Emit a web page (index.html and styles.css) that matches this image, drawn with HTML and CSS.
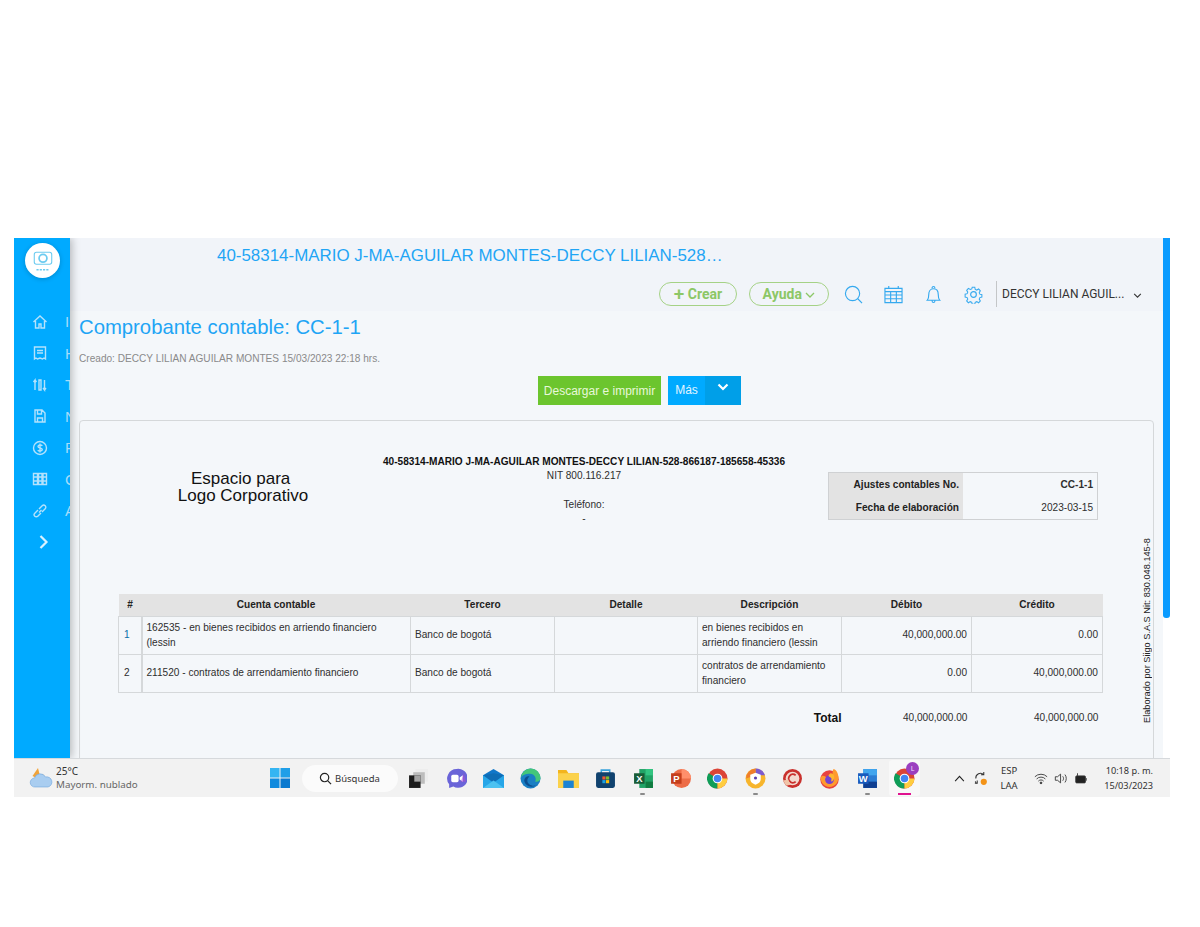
FILE: index.html
```html
<!DOCTYPE html>
<html lang="es">
<head>
    <meta charset="UTF-8">
    <title>Comprobante contable: CC-1-1</title>
    <link rel="stylesheet" href="styles.css">
</head>
<body>
    <div class="screen">
        <div class="app">
            <nav class="sidebar">
                <div class="brand">
                    <svg width="24" height="22" viewBox="0 0 22 20" fill="none" stroke="#6ccbf0" stroke-width="1"><rect x="3" y="2" width="16" height="11" rx="2"/><circle cx="11" cy="7.5" r="3.6" stroke-width="1.6"/><path d="M5 18h12" stroke-width="1.2" stroke-dasharray="2 1"/></svg>
                </div>
                <ul class="side-menu">
                    <li><svg viewBox="0 0 16 16"><path d="M1.5 8 8 2l6.500 6M3.500 7v7h3.500v-4h2v4h3.500V7"/></svg><span>Inicio</span></li>
                    <li><svg viewBox="0 0 16 16"><path d="M2.500 2h11v12l-1.500-1-1.500 1-2.500-1-2.500 1-1.500-1-1.500 1zM5 5.500h6M5 8h6"/></svg><span>Historial</span></li>
                    <li><svg viewBox="0 0 16 16"><path d="M3 13V3L1.500 5M3 3l1.500 2M7 3h2v10H7zM12.500 3v10l-1.500-2M12.500 13l1.500-2"/></svg><span>Terceros</span></li>
                    <li><svg viewBox="0 0 16 16"><path d="M3 2h7l3 3v9H3zM5.500 2v4h4V2M5.500 14v-4h5v4"/></svg><span>Nómina</span></li>
                    <li><svg viewBox="0 0 16 16"><circle cx="8" cy="8" r="6.500"/><path d="M10.300 5.800C9.500 4.600 6 4.700 6 6.500s4.300 1.200 4.300 3.100S6.700 11.500 5.800 10.200M8 3.500v9"/></svg><span>Reportes</span></li>
                    <li><svg viewBox="0 0 16 16"><path d="M1.500 2.500h4v11h-4zM6.500 2.500h3.500v11H6.500zM11 2.500h3.500v11H11zM1.500 6h13M1.500 10h13"/></svg><span>Contabilidad</span></li>
                    <li><svg viewBox="0 0 16 16"><path d="M7 9.500 9.500 7M6 7 2.800 10.200a2.100 2.100 0 0 0 3 3L9 10M7 6l3.200-3.200a2.100 2.100 0 0 1 3 3L10 9"/></svg><span>Accesos</span></li>
                </ul>
                <svg class="side-toggle" viewBox="0 0 10 16"><path d="M2 2l6 6-6 6"/></svg>
            </nav>

            <main class="main">
                <header class="topbar">
                    <div class="company-title">40-58314-MARIO J-MA-AGUILAR MONTES-DECCY LILIAN-528…</div>
                    <div class="top-actions">
                        <button class="pill"><span class="pill-plus">+</span> Crear</button>
                        <button class="pill">Ayuda <svg class="pill-caret" viewBox="0 0 10 6"><path d="M1 1l4 4 4-4"/></svg></button>
                        <svg class="top-icon" viewBox="0 0 20 20"><circle cx="9" cy="9" r="7.500"/><path d="M14.500 14.500 19 19"/></svg>
                        <svg class="top-icon" viewBox="0 0 20 20"><path d="M1 3.500h18v15H1zM1 7h18M1 10.500h18M1 14.500h18M7 7v11.500M13 7v11.500M5 1v3M15 1v3"/></svg>
                        <svg class="top-icon" viewBox="0 0 20 20"><path d="M3.500 16c1.500-1.500 1.500-3 1.500-6s1.500-6 5-6 5 3 5 6 0 4.500 1.500 6zM8.500 16.500c0 2.500 3 2.500 3 0M8.500 3.500C8.500 1 11.500 1 11.500 3.500"/></svg>
                        <svg class="top-icon" viewBox="0 0 20 20"><circle cx="10" cy="10" r="3"/><path d="M8.500 1.500h3l.5 2.500 1.800.8 2.200-1.300 2 2.200-1.300 2.100.7 1.800 2.400.6v2.800l-2.400.6-.7 1.800 1.300 2.100-2 2.200-2.200-1.300-1.800.8-.5 2.300h-3l-.5-2.300-1.800-.8-2.200 1.300-2-2.200 1.300-2.100-.7-1.800-2.400-.6V9.600l2.400-.6.7-1.800-1.300-2.100 2-2.200 2.200 1.300 1.800-.8z" transform="translate(1 1) scale(.9)"/></svg>
                        <div class="user-menu">
                            <span>DECCY LILIAN AGUIL...</span>
                            <svg viewBox="0 0 10 6"><path d="M1 1l4 4 4-4"/></svg>
                        </div>
                    </div>
                </header>

                <section class="page-head">
                    <h1>Comprobante contable: CC-1-1</h1>
                    <p>Creado: DECCY LILIAN AGUILAR MONTES 15/03/2023 22:18 hrs.</p>
                    <div class="page-actions">
                        <button class="btn-print">Descargar e imprimir</button>
                        <div class="btn-more">
                            <span>Más</span>
                            <span class="btn-more-caret"><svg viewBox="0 0 12 8"><path d="M1.500 1.500 6 6l4.500-4.500"/></svg></span>
                        </div>
                    </div>
                </section>

                <article class="doc-card">
                    <div class="doc">
                        <div class="doc-head">
                            <div class="logo-space">Espacio para&nbsp;<br>Logo Corporativo</div>
                            <div class="company">
                                <strong>40-58314-MARIO J-MA-AGUILAR MONTES-DECCY LILIAN-528-866187-185658-45336</strong>
                                <span>NIT 800.116.217</span>
                                <span class="company-phone">Teléfono:</span>
                                <span>-</span>
                            </div>
                            <div class="doc-info">
                                <div class="info-label">Ajustes contables No.</div>
                                <div class="info-value info-strong">CC-1-1</div>
                                <div class="info-label">Fecha de elaboración</div>
                                <div class="info-value">2023-03-15</div>
                            </div>
                        </div>

                        <table class="entries">
                            <colgroup>
                                <col class="col-n"><col class="col-account"><col class="col-third"><col class="col-detail">
                                <col class="col-desc"><col class="col-debit"><col class="col-credit">
                            </colgroup>
                            <thead>
                                <tr><th>#</th><th>Cuenta contable</th><th>Tercero</th><th>Detalle</th><th>Descripción</th><th>Débito</th><th>Crédito</th></tr>
                            </thead>
                            <tbody>
                                <tr>
                                    <td class="row-link">1</td>
                                    <td>162535 - en bienes recibidos en arriendo financiero (lessin</td>
                                    <td>Banco de bogotá</td>
                                    <td></td>
                                    <td>en bienes recibidos en arriendo financiero (lessin</td>
                                    <td class="num">40,000,000.00</td>
                                    <td class="num">0.00</td>
                                </tr>
                                <tr>
                                    <td>2</td>
                                    <td>211520 - contratos de arrendamiento financiero</td>
                                    <td>Banco de bogotá</td>
                                    <td></td>
                                    <td>contratos de arrendamiento financiero</td>
                                    <td class="num">0.00</td>
                                    <td class="num">40,000,000.00</td>
                                </tr>
                            </tbody>
                            <tfoot>
                                <tr>
                                    <td colspan="5" class="total-label">Total</td>
                                    <td class="num">40,000,000.00</td>
                                    <td class="num">40,000,000.00</td>
                                </tr>
                            </tfoot>
                        </table>
                    </div>
                    <div class="doc-side">Elaborado por Siigo S.A.S Nit: 830.048.145-8</div>
                </article>
            </main>

            <div class="scrollbar"><div class="scrollbar-thumb"></div></div>
        </div>

        <footer class="taskbar">
            <div class="weather">
                <svg width="26" height="24" viewBox="0 0 26 24"><path d="M10 2l1.500 6 5 1-6 4-6-3z" fill="#f0a33a"/><path d="M7 21a4.500 4.500 0 0 1-.5-9 6 6 0 0 1 11-1 5 5 0 0 1 2.500 10z" fill="#a9cdf0" stroke="#6fa5dc" stroke-width=".6"/></svg>
                <div class="weather-text"><span>25°C</span><span class="weather-sub">Mayorm. nublado</span></div>
            </div>

            <div class="task-center">
                <svg class="win-logo" viewBox="0 0 20 20"><path d="M0 0h9.500v9.500H0z" fill="#35b5f2"/><path d="M10.500 0H20v9.500h-9.500z" fill="#1f9fe8"/><path d="M0 10.500h9.500V20H0z" fill="#0f8ade"/><path d="M10.500 10.500H20V20h-9.500z" fill="#0a79cf"/></svg>
                <div class="task-search">
                    <svg viewBox="0 0 14 14"><circle cx="6" cy="6" r="4.500"/><path d="M9.500 9.500 13 13"/></svg>
                    <span>Búsqueda</span>
                </div>
                <div class="task-apps">
                    <div class="task-app"><svg viewBox="0 0 20 20"><path d="M7 1h12v12H7z" fill="#ededed"/><path d="M5 4h11v11H5z" fill="#bdbdbd"/><path d="M1 7h11v12H1z" fill="#1c1c1c"/><path d="M6 7h6v6H6z" fill="#a5a5a5"/></svg></div>
                    <div class="task-app"><svg viewBox="0 0 20 20"><path d="M10 1a9 9 0 0 0-7 14.500V19l4-1.500A9 9 0 1 0 10 1z" fill="#6a64d8"/><rect x="5" y="6.500" width="7" height="7" rx="1.500" fill="#fff"/><path d="M13 9l3-2v6l-3-2z" fill="#fff"/><path d="M17 5l-3 8h5z" fill="#b24bd0" opacity=".5"/></svg></div>
                    <div class="task-app"><svg viewBox="0 0 20 20"><path d="M0 7 10 1l10 6v12H0z" fill="#1177c9"/><path d="M0 7h20v12H0z" fill="#27a6e8"/><path d="M0 7l10 7 10-7-10-2z" fill="#0f6db5"/><path d="M0 19l10-7 10 7z" fill="#4cc2f1"/></svg></div>
                    <div class="task-app"><svg viewBox="0 0 20 20"><circle cx="10" cy="10" r="9.500" fill="#1a7fc4"/><path d="M1 9C2 3 7 .5 10 .5c5 0 9.500 4 9.500 9 0 3-3 4-5 3.500C16 10 14 5.500 9.500 5.500 5.500 5.500 2 7 1 9z" fill="#43c67a"/><path d="M7 12c0 3 3 5 6 5 1 0 2-.3 3-1-4 3.500-11 2-12-4 0-3 3-5 5-4-1 1-2 2-2 4z" fill="#0c4e8f"/></svg></div>
                    <div class="task-app"><svg viewBox="0 0 20 20"><path d="M0 2h8l2 3h10v14H0z" fill="#f3b51d"/><path d="M0 5h20v14H0z" fill="#fbd24c"/><path d="M5 12h10v7H5z" fill="#1b83d4"/></svg></div>
                    <div class="task-app"><svg viewBox="0 0 20 20"><path d="M6 5V2h8v3" fill="none" stroke="#38a3dc" stroke-width="1.500"/><rect x="1" y="4" width="18" height="15" rx="2" fill="#10426e"/><path d="M7 8h3v3H7z" fill="#f15a30"/><path d="M10.500 8h3v3h-3z" fill="#7fba2c"/><path d="M7 11.500h3v3H7z" fill="#1ba1e2"/><path d="M10.500 11.500h3v3h-3z" fill="#fbbc09"/></svg></div>
                    <div class="task-app has-dot"><svg viewBox="0 0 20 20"><path d="M6 1h13v18H6z" fill="#21a366"/><path d="M12 1h7v6h-7z" fill="#33c481"/><path d="M12 13h7v6h-7z" fill="#107c41"/><rect x="1" y="5" width="10" height="10" fill="#185c37"/><text x="6" y="13" class="app-letter">X</text></svg></div>
                    <div class="task-app"><svg viewBox="0 0 20 20"><circle cx="11" cy="10" r="9" fill="#ed6c47"/><path d="M11 1a9 9 0 0 1 9 9h-9z" fill="#ff8f6b"/><rect x="1" y="5" width="10" height="10" fill="#c43e1c"/><text x="6" y="13" class="app-letter">P</text></svg></div>
                    <div class="task-app"><svg viewBox="0 0 20 20"><circle cx="10" cy="10" r="9.500" fill="#db4437"/><path d="M10 10 1.500 5A9.500 9.500 0 0 0 10 19.500z" fill="#0f9d58"/><path d="M10 10h9.500A9.500 9.500 0 0 1 10 19.500z" fill="#ffcd40"/><circle cx="10" cy="10" r="4.600" fill="#fff"/><circle cx="10" cy="10" r="3.600" fill="#4285f4"/></svg></div>
                    <div class="task-app has-dot"><svg viewBox="0 0 20 20"><circle cx="10" cy="10" r="9.500" fill="#f7b52c"/><path d="M10 .5a9.500 9.500 0 0 1 9 6.500H10z" fill="#7d5bd0"/><path d="M1 10a9.500 9.500 0 0 1 9-9.500V7z" fill="#ef7d2d"/><path d="M10 4.500l5 2v4c0 3-2.500 4.500-5 5.500-2.500-1-5-2.500-5-5.500v-4z" fill="#fff"/><circle cx="10" cy="9.500" r="1.500" fill="#5a3fb0"/></svg></div>
                    <div class="task-app"><svg viewBox="0 0 20 20"><circle cx="10" cy="10" r="9" fill="#c9302c"/><circle cx="10" cy="10" r="6.500" fill="#f3d9cf"/><path d="M13 7a4 4 0 1 0 0 6" fill="none" stroke="#c9302c" stroke-width="1.800"/><path d="M1 12l5-1 2 5-4 1z" fill="#f0c4a8"/></svg></div>
                    <div class="task-app"><svg viewBox="0 0 20 20"><circle cx="10" cy="11" r="8.800" fill="#e8423f"/><path d="M18.500 8c.5 5-3 10-8.500 10S1.200 13 1.500 9C4 4 8 12 12 8c2-2 0-5 2-7 3 1 4 4 4.500 7z" fill="#ff9a2e"/><circle cx="10" cy="11" r="4.200" fill="#7542d0"/><path d="M11 5c4 0 5 6 1 8-1-1 1-3-1-4s-3-2 0-4z" fill="#ffb52e"/></svg></div>
                    <div class="task-app has-dot"><svg viewBox="0 0 20 20"><path d="M6 1h13v18H6z" fill="#2b7cd3"/><path d="M6 1h13v6H6z" fill="#41a5ee"/><path d="M6 13h13v6H6z" fill="#103f91"/><rect x="1" y="5" width="10" height="10" fill="#185abd"/><text x="6" y="13" class="app-letter">W</text></svg></div>
                    <div class="task-app is-active">
                        <svg viewBox="0 0 20 20"><circle cx="10" cy="10" r="9.500" fill="#db4437"/><path d="M10 10 1.500 5A9.500 9.500 0 0 0 10 19.500z" fill="#0f9d58"/><path d="M10 10h9.500A9.500 9.500 0 0 1 10 19.500z" fill="#ffcd40"/><circle cx="10" cy="10" r="4.600" fill="#fff"/><circle cx="10" cy="10" r="3.600" fill="#4285f4"/></svg>
                        <span class="profile-badge">L</span>
                    </div>
                </div>
            </div>

            <div class="tray">
                <svg class="tray-caret" viewBox="0 0 12 8"><path d="M1 7l5-5.500L11 7"/></svg>
                <svg class="tray-sync" viewBox="0 0 16 16"><path d="M3 8a5 5 0 0 1 8.500-4M11.500 1v3h-3M4 13.500A5 5 0 0 1 2.500 11M4.500 10v3h-2.500"/><circle cx="11.500" cy="11.500" r="3.300" fill="#f39317" stroke="none"/></svg>
                <div class="tray-lang"><span>ESP</span><span>LAA</span></div>
                <svg class="tray-icon" viewBox="0 0 16 14"><path d="M1 5a10 10 0 0 1 14 0M3 7.500a7 7 0 0 1 10 0M5 10a4 4 0 0 1 6 0"/><circle cx="8" cy="12" r="1" fill="#333"/></svg>
                <svg class="tray-icon" viewBox="0 0 16 14"><path d="M1.500 5v4h2.500l3.500 3V2L4 5zM10 4.500c1.200 1.500 1.200 3.500 0 5M12.500 2.500c2 2.500 2 6.500 0 9"/></svg>
                <svg class="tray-icon" viewBox="0 0 16 14"><rect x="2" y="4" width="11" height="8" rx="1" fill="#222"/><path d="M14 6.500v3M4 4V1"/></svg>
                <div class="tray-clock"><span>10:18 p. m.</span><span>15/03/2023</span></div>
            </div>
        </footer>
    </div>
</body>
</html>
```

FILE: styles.css
```css
/* Screenshot of the accounting app, sits on a white page */
:root {
    --blue: #00aaff;
    --title-blue: #1fa5f5;
    --green: #8cc766;
    --bg-top: #f1f4f9;
    --bg-page: #f4f7fa;
    --line: #d5d8da;
    --head-gray: #e3e3e3;
    --text: #2e2e2e;
}

* {
    box-sizing: border-box;
}

body {
    margin: 0;
    background: #fff;
    font-family: "Liberation Sans", Arial, sans-serif;
    color: var(--text);
}

.screen {
    width: 1156px;
    height: 559px;
    margin: 238px 0 0 14px;
    display: flex;
    flex-direction: column;
}

.app {
    display: flex;
    height: 520px;
    overflow: hidden;
}

/* Sidebar */
.sidebar {
    width: 56px;
    flex: none;
    background: var(--blue);
    overflow: hidden;
    display: flex;
    flex-direction: column;
    box-shadow: 2px 0 8px rgba(0, 0, 0, .25);
    position: relative;
    z-index: 1;
}

.brand {
    width: 35px;
    height: 35px;
    margin: 5px 0 0 11px;
    border-radius: 50%;
    background: #fff;
    box-shadow: 0 1px 5px rgba(0, 0, 0, .2);
    display: flex;
    align-items: center;
    justify-content: center;
}

.side-menu {
    list-style: none;
    margin: 28px 0 0;
    padding: 0 0 0 18px;
}

.side-menu li {
    height: 31.5px;
    display: flex;
    align-items: center;
    gap: 17px;
    white-space: nowrap;
    font-size: 15px;
    color: #a5dcfb;
}

.side-menu svg {
    width: 16px;
    height: 16px;
    flex: none;
    fill: none;
    stroke: #b4e2fc;
    stroke-width: 1.400;
}

.side-toggle {
    width: 11px;
    height: 16px;
    margin: 7px 0 0 24px;
    fill: none;
    stroke: #d8f1ff;
    stroke-width: 2.200;
}

/* Main column */
.main {
    flex: 1;
    min-width: 0;
    background: var(--bg-page);
    overflow: hidden;
}

.topbar {
    height: 73px;
    background: var(--bg-top);
    padding: 7px 20px 0 147px;
}

.company-title {
    height: 22px;
    font-size: 16.930px;
    line-height: 22px;
    color: var(--title-blue);
    white-space: nowrap;
}

.top-actions {
    display: flex;
    align-items: center;
    margin: 14px 0 0 442px;
    height: 26px;
}

.pill {
    height: 24px;
    border: 1.5px solid #a5d286;
    border-radius: 12px;
    background: transparent;
    color: var(--green);
    font-family: Roboto, Arial, sans-serif;
    font-size: 14px;
    font-weight: 700;
    padding: 0;
    width: 78px;
    margin-right: 12px;
}

.pill + .pill {
    width: 80px;
    margin-right: 15px;
}

.pill-plus {
    font-size: 19px;
    line-height: 14px;
    font-weight: 500;
    vertical-align: -1px;
}

.pill-caret {
    width: 10px;
    height: 6px;
    fill: none;
    stroke: var(--green);
    stroke-width: 1.300;
    vertical-align: 1px;
}

.top-icon {
    width: 19px;
    height: 19px;
    margin-right: 21px;
    fill: none;
    stroke: #35a9ef;
    stroke-width: 1.200;
    flex: none;
}

.user-menu {
    margin-left: -8px;
    height: 26px;
    padding-left: 5px;
    border-left: 1px solid #c4c6c8;
    display: flex;
    align-items: center;
    font-family: Roboto, Arial, sans-serif;
    font-size: 12px;
    color: #333;
    white-space: nowrap;
}

.user-menu svg {
    width: 9px;
    height: 5px;
    margin: 3px 0 0 9px;
    fill: none;
    stroke: #333;
    stroke-width: 1.300;
}

.page-head {
    height: 109px;
    padding: 4px 0 0 9px;
}

.page-head h1 {
    margin: 0;
    font-size: 20.300px;
    font-weight: 400;
    line-height: 24px;
    color: var(--title-blue);
}

.page-head p {
    margin: 14px 0 0;
    font-size: 10.100px;
    line-height: 12px;
    color: #8a8a8a;
}

.page-actions {
    display: flex;
    gap: 7px;
    margin: 11px 0 0 459px;
}

.btn-print {
    width: 123px;
    height: 29px;
    border: 0;
    padding: 0;
    background: #6cc52e;
    color: #e8f8da;
    font-family: "Liberation Sans", Arial, sans-serif;
    font-size: 12px;
}

.btn-more {
    display: flex;
    width: 73px;
    height: 29px;
    background: var(--blue);
    color: #e2f5ff;
    font-size: 12px;
    line-height: 29px;
}

.btn-more > span:first-child {
    width: 37px;
    text-align: center;
}

.btn-more-caret {
    flex: 1;
    background: #009fe8;
    text-align: center;
}

.btn-more-caret svg {
    width: 12px;
    height: 8px;
    margin-bottom: 3px;
    fill: none;
    stroke: #fff;
    stroke-width: 2.200;
}

/* Document card */
.doc-card {
    margin: 0 9px;
    height: 360px;
    border: 1px solid var(--line);
    border-radius: 4px;
    display: flex;
    padding: 34px 0 0 38px;
}

.doc {
    width: 985px;
    flex: none;
}

.doc-head {
    display: flex;
    height: 139px;
}

.logo-space {
    width: 250px;
    padding-top: 15px;
    text-align: center;
    font-size: 17px;
    line-height: 17px;
    color: #111;
}

.company {
    width: 432px;
    display: flex;
    flex-direction: column;
    align-items: center;
    font-size: 10.100px;
    line-height: 14px;
    white-space: nowrap;
}

.company strong {
    color: #111;
}

.company-phone {
    margin-top: 15px;
}

.doc-info {
    width: 270px;
    height: 48px;
    margin: 17px 0 0 28px;
    border: 1px solid #cfd1d3;
    display: grid;
    grid-template-columns: 134px 1fr;
    font-size: 10.100px;
    line-height: 23px;
}

.info-label {
    background: var(--head-gray);
    text-align: right;
    padding-right: 4px;
    font-weight: 700;
    color: #222;
}

.info-value {
    text-align: right;
    padding-right: 4px;
}

.info-strong {
    font-weight: 700;
}

.entries {
    width: 984px;
    table-layout: fixed;
    border-collapse: collapse;
    font-size: 10.100px;
    line-height: 14.500px;
}

.col-n { width: 23px; }
.col-account { width: 269px; }
.col-third { width: 144px; }
.col-detail { width: 143px; }
.col-desc { width: 144px; }
.col-debit { width: 130px; }
.col-credit { width: 131px; }

.entries th {
    height: 22px;
    padding: 0;
    background: var(--head-gray);
    font-weight: 700;
    color: #222;
}

.entries tbody td {
    height: 38px;
    padding: 1px 4px 0;
    border: 1px solid var(--line);
}

.entries tbody td:first-child {
    border-right-width: 2px;
    padding-left: 5px;
}

.row-link {
    color: #0a6fa8;
}

.entries .num {
    text-align: right;
    padding-right: 4px;
}

.entries tfoot td {
    height: 52px;
    padding: 0 4px;
}

.entries .total-label {
    padding-right: 0;
    text-align: right;
    font-size: 12px;
    font-weight: 700;
    color: #111;
}

.doc-side {
    margin: 85px 0 0 37px;
    height: 183px;
    writing-mode: vertical-rl;
    transform: rotate(180deg);
    font-size: 9.200px;
    line-height: 14px;
    white-space: nowrap;
    color: #222;
    text-align: left;
}

.scrollbar {
    width: 7px;
    flex: none;
    background: #fff;
}

.scrollbar-thumb {
    height: 380px;
    background: #0a9bff;
    border-radius: 0 0 3px 3px;
}

/* Windows taskbar */
.taskbar {
    flex: 1;
    background: #f2f2f2;
    border-top: 1px solid #d6d9dc;
    display: flex;
    align-items: center;
    font-family: "Noto Sans", "Open Sans", sans-serif;
    font-size: 10px;
    color: #333;
    padding-left: 14px;
}

.weather {
    width: 242px;
    display: flex;
    align-items: center;
    gap: 2px;
}

.weather-text {
    display: flex;
    flex-direction: column;
    line-height: 14px;
    white-space: nowrap;
}

.weather-sub {
    color: #666;
    font-size: 9.800px;
}

.task-center {
    display: flex;
    align-items: center;
}

.win-logo {
    width: 20px;
    height: 20px;
    flex: none;
}

.task-search {
    width: 96px;
    height: 27px;
    margin-left: 12px;
    border-radius: 14px;
    background: #fbfbfb;
    display: flex;
    align-items: center;
    padding-left: 17px;
    gap: 3px;
    font-size: 9.500px;
}

.task-search svg {
    width: 13px;
    height: 13px;
    fill: none;
    stroke: #222;
    stroke-width: 1.300;
}

.task-apps {
    display: flex;
    margin-left: 2px;
}

.task-app {
    width: 37.400px;
    height: 36px;
    display: flex;
    align-items: center;
    justify-content: center;
    position: relative;
}

.task-app svg {
    width: 21px;
    height: 21px;
}

.app-letter {
    font-family: "Liberation Sans", sans-serif;
    font-size: 9px;
    font-weight: 700;
    fill: #fff;
    text-anchor: middle;
}

.has-dot::after {
    content: "";
    position: absolute;
    left: 16px;
    bottom: 1px;
    width: 5px;
    height: 2px;
    border-radius: 1px;
    background: #8a8a8a;
}

.is-active {
    background: #f8f8f8;
    border-radius: 3px;
    width: 31px;
    margin-left: 3px;
}

.is-active::after {
    content: "";
    position: absolute;
    left: 9px;
    bottom: 1px;
    width: 13px;
    height: 2.500px;
    background: #e0128f;
}

.profile-badge {
    position: absolute;
    right: 1px;
    top: 2px;
    width: 13px;
    height: 13px;
    border-radius: 50%;
    background: #9b3fc0;
    color: #f3dcff;
    font-size: 7px;
    line-height: 13px;
    text-align: center;
}

.tray {
    flex: 1;
    display: flex;
    align-items: center;
    padding-left: 34px;
}

.tray-caret {
    width: 11px;
    height: 7px;
    fill: none;
    stroke: #222;
    stroke-width: 1.200;
}

.tray-sync {
    width: 15px;
    height: 15px;
    margin-left: 8px;
    fill: none;
    stroke: #333;
    stroke-width: 1.100;
}

.tray-lang {
    width: 30px;
    margin-left: 6px;
    display: flex;
    flex-direction: column;
    align-items: center;
    line-height: 15px;
    font-size: 9.500px;
}

.tray-icon {
    width: 14px;
    height: 13px;
    margin-left: 6px;
    fill: none;
    stroke: #333;
    stroke-width: 1;
}

.tray-lang + .tray-icon {
    margin-left: 10px;
}

.tray-clock {
    width: 57px;
    margin-left: 8px;
    display: flex;
    flex-direction: column;
    align-items: flex-end;
    line-height: 15px;
    font-size: 9.200px;
    white-space: nowrap;
}
```
